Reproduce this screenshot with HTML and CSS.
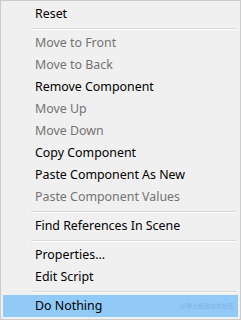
FILE: index.html
```html
<!DOCTYPE html>
<html>
<head>
<meta charset="utf-8">
<link rel="stylesheet" href="styles.css">
</head>
<body>
<div class="menu">
  <div class="item">Reset</div>
  <div class="sep"></div>
  <div class="item disabled">Move to Front</div>
  <div class="item disabled">Move to Back</div>
  <div class="item">Remove Component</div>
  <div class="item disabled">Move Up</div>
  <div class="item disabled">Move Down</div>
  <div class="item">Copy Component</div>
  <div class="item">Paste Component As New</div>
  <div class="item disabled">Paste Component Values</div>
  <div class="sep"></div>
  <div class="item">Find References In Scene</div>
  <div class="sep"></div>
  <div class="item">Properties...</div>
  <div class="item">Edit Script</div>
  <div class="sep"></div>
  <div class="item active">Do Nothing<span class="mark">@稀土掘金技术社区</span></div>
</div>
</body>
</html>
```
FILE: styles.css
```css
html, body {
  margin: 0;
  padding: 0;
  background: #f0f0f0;
}
.menu {
  box-sizing: border-box;
  width: 241px;
  height: 320px;
  border: 1px solid #cccccc;
  background: #f0f0f0;
  padding: 2px;
  font-family: "Noto Sans", sans-serif;
  font-size: 12.4px;
  color: #000;
  display: flex;
  flex-direction: column;
}
.item {
  position: relative;
  height: 22px;
  line-height: 22px;
  padding-left: 32px;
  white-space: nowrap;
}
.item.disabled {
  color: #737373;
}
.item.active {
  background: #91c9f7;
}
.sep {
  height: 7px;
  display: flex;
  align-items: center;
  padding-left: 28px;
  padding-right: 2px;
}
.sep::before {
  content: "";
  display: block;
  flex: 1;
  height: 1px;
  border-top: 1px solid #d7d7d7;
  background: #ffffff;
}
.mark {
  position: absolute;
  right: 4px;
  top: 0;
  font-size: 6px;
  color: #7fb4e0;
  font-family: "Noto Sans CJK SC", sans-serif;
}
```
